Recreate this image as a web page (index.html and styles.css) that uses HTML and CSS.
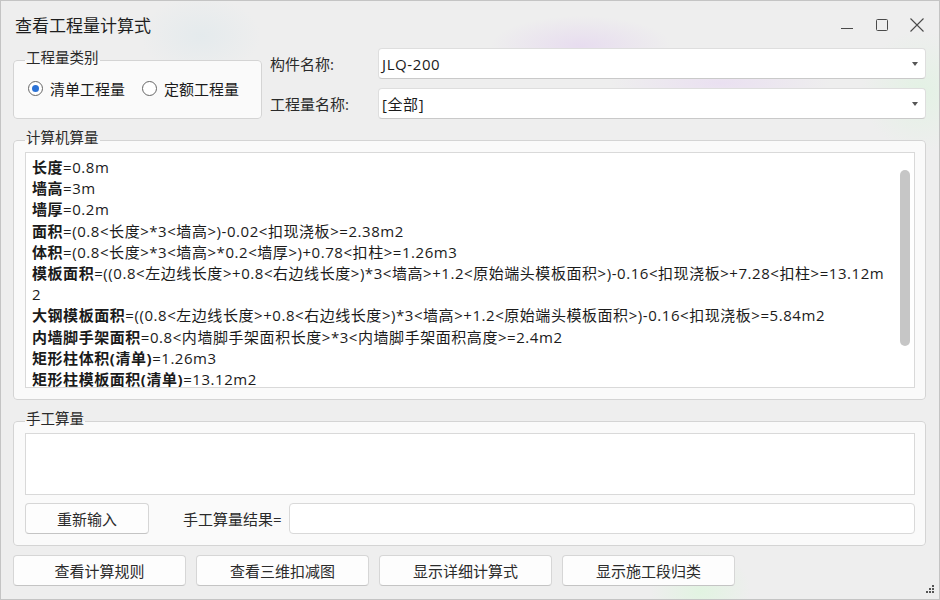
FILE: index.html
```html
<!DOCTYPE html>
<html lang="zh-CN">
<head>
  <meta charset="UTF-8" />
  <title>查看工程量计算式</title>
  <link rel="stylesheet" href="styles.css">
</head>
<body>
  <div class="window">
    <div class="titlebar">
      <div class="title">查看工程量计算式</div>
      <div class="controls">
        <div class="ctl">
          <svg width="14" height="14" viewBox="0 0 14 14"><path d="M1 10.5H13" stroke="#4a4a4a" stroke-width="1" fill="none"/></svg>
        </div>
        <div class="ctl">
          <svg width="14" height="14" viewBox="0 0 14 14"><rect x="1.5" y="1.5" width="11" height="11" rx="1" stroke="#4a4a4a" stroke-width="1" fill="none"/></svg>
        </div>
        <div class="ctl">
          <svg width="16" height="16" viewBox="0 0 16 16"><path d="M1.5 1.5L14.5 14.5M14.5 1.5L1.5 14.5" stroke="#4a4a4a" stroke-width="1.1" fill="none"/></svg>
        </div>
      </div>
    </div>

    <div class="content">
      <div class="top-row">
        <fieldset class="group type-group">
          <legend>工程量类别</legend>
          <div class="radios">
            <label class="radio"><span class="dot checked"></span>清单工程量</label>
            <label class="radio"><span class="dot"></span>定额工程量</label>
          </div>
        </fieldset>
        <div class="fields">
          <div class="field-label">构件名称:</div>
          <div class="combo"><span class="combo-text">JLQ-200</span><span class="arrow"></span></div>
          <div class="field-label">工程量名称:</div>
          <div class="combo"><span class="combo-text">[全部]</span><span class="arrow"></span></div>
        </div>
      </div>

      <fieldset class="group">
        <legend>计算机算量</legend>
        <div class="calc-box">
          <div class="calc-text">
            <div class="line"><b>长度</b>=0.8m</div>
            <div class="line"><b>墙高</b>=3m</div>
            <div class="line"><b>墙厚</b>=0.2m</div>
            <div class="line"><b>面积</b>=(0.8&lt;长度&gt;*3&lt;墙高&gt;)-0.02&lt;扣现浇板&gt;=2.38m2</div>
            <div class="line"><b>体积</b>=(0.8&lt;长度&gt;*3&lt;墙高&gt;*0.2&lt;墙厚&gt;)+0.78&lt;扣柱&gt;=1.26m3</div>
            <div class="line"><b>模板面积</b>=((0.8&lt;左边线长度&gt;+0.8&lt;右边线长度&gt;)*3&lt;墙高&gt;+1.2&lt;原始端头模板面积&gt;)-0.16&lt;扣现浇板&gt;+7.28&lt;扣柱&gt;=13.12m2</div>
            <div class="line"><b>大钢模板面积</b>=((0.8&lt;左边线长度&gt;+0.8&lt;右边线长度&gt;)*3&lt;墙高&gt;+1.2&lt;原始端头模板面积&gt;)-0.16&lt;扣现浇板&gt;=5.84m2</div>
            <div class="line"><b>内墙脚手架面积</b>=0.8&lt;内墙脚手架面积长度&gt;*3&lt;内墙脚手架面积高度&gt;=2.4m2</div>
            <div class="line"><b>矩形柱体积(清单)</b>=1.26m3</div>
            <div class="line"><b>矩形柱模板面积(清单)</b>=13.12m2</div>
          </div>
          <div class="scrollbar"><div class="thumb"></div></div>
        </div>
      </fieldset>

      <fieldset class="group manual-group">
        <legend>手工算量</legend>
        <div class="manual-box"></div>
        <div class="manual-row">
          <div class="btn reset-btn">重新输入</div>
          <div class="result-label">手工算量结果=</div>
          <div class="result-input"></div>
        </div>
      </fieldset>

      <div class="button-row">
        <div class="btn">查看计算规则</div>
        <div class="btn">查看三维扣减图</div>
        <div class="btn">显示详细计算式</div>
        <div class="btn">显示施工段归类</div>
      </div>
    </div>

    <svg class="grip" width="10" height="10" viewBox="0 0 10 10">
      <rect x="7" y="1" width="2" height="2" fill="#555"/>
      <rect x="4" y="4" width="2" height="2" fill="#555"/>
      <rect x="7" y="4" width="2" height="2" fill="#555"/>
      <rect x="1" y="7" width="2" height="2" fill="#555"/>
      <rect x="4" y="7" width="2" height="2" fill="#555"/>
      <rect x="7" y="7" width="2" height="2" fill="#555"/>
    </svg>
  </div>
</body>
</html>
```

FILE: styles.css
```css
* {
  box-sizing: border-box;
}
body {
  margin: 0;
  font-family: "Open Sans", "Noto Sans CJK SC", "Microsoft YaHei", sans-serif;
  font-size: 15px;
  color: #1b1b1b;
}
.window {
  position: relative;
  width: 940px;
  height: 600px;
  border: 1px solid #c4c4c4;
  background-color: #eeeeee;
  background-image:
    radial-gradient(ellipse 90px 30px at 580px 45px, rgba(226, 206, 240, 0.55), transparent),
    radial-gradient(ellipse 110px 25px at 720px 82px, rgba(230, 210, 244, 0.5), transparent),
    radial-gradient(ellipse 60px 60px at 920px 90px, rgba(220, 244, 222, 0.6), transparent),
    radial-gradient(ellipse 50px 40px at 700px 590px, rgba(220, 246, 220, 0.7), transparent),
    radial-gradient(ellipse 60px 40px at 200px 35px, rgba(222, 232, 236, 0.6), transparent);
}
.titlebar {
  height: 47px;
  display: flex;
  align-items: center;
  justify-content: space-between;
  padding: 0 5px 0 14px;
}
.title {
  font-size: 17px;
  color: #1e1e1e;
}
.controls {
  display: flex;
}
.ctl {
  width: 35px;
  height: 30px;
  display: flex;
  align-items: center;
  justify-content: center;
}
.content {
  padding: 0 13px 0 12px;
  display: flex;
  flex-direction: column;
}
.group {
  margin: 0;
  padding: 0 10px 11px 11px;
  border: 1px solid #d4d4d4;
  border-radius: 4px;
  background-color: rgba(255, 255, 255, 0.72);
  min-width: 0;
}
.group legend {
  padding: 0 1px 4px;
  line-height: 20px;
  font-size: 14.5px;
  color: #2a2a2a;
}
.top-row {
  display: flex;
  gap: 8px;
  margin-bottom: 9px;
}
.type-group {
  width: 249px;
  padding-bottom: 18px;
}
.radios {
  display: flex;
  gap: 17px;
  height: 24px;
  margin: 4px 0 0 3px;
}
.radio {
  display: flex;
  align-items: center;
  gap: 7px;
  color: #1b1b1b;
}
.dot {
  width: 15px;
  height: 15px;
  border: 1px solid #666;
  border-radius: 50%;
  background: #fff;
  display: flex;
  align-items: center;
  justify-content: center;
}
.dot.checked::after {
  content: "";
  width: 7px;
  height: 7px;
  border-radius: 50%;
  background: #2b72d6;
}
.fields {
  flex: 1;
  display: grid;
  grid-template-columns: 108px 1fr;
  row-gap: 9px;
  align-items: center;
}
.field-label {
  color: #2a2a2a;
}
.combo {
  height: 31px;
  background: #fff;
  border: 1px solid #dedede;
  border-bottom-color: #c9c9c9;
  border-radius: 4px;
  padding: 0 7px 0 3px;
  display: flex;
  align-items: center;
  justify-content: space-between;
}
.combo-text {
  letter-spacing: 0.6px;
}
.arrow {
  width: 0;
  height: 0;
  border-left: 3px solid transparent;
  border-right: 3px solid transparent;
  border-top: 4px solid #555;
}
.calc-box {
  height: 236px;
  background: #fff;
  border: 1px solid #d9d9d9;
  display: flex;
  overflow: hidden;
}
.calc-text {
  flex: 1;
  padding: 4px 8px 0 6px;
  overflow: hidden;
  word-break: break-all;
  letter-spacing: 0.55px;
}
.line {
  line-height: 21.2px;
}
.line b {
  font-weight: bold;
}
.scrollbar {
  width: 10px;
  margin: 17px 4px 0 4px;
}
.thumb {
  height: 176px;
  border-radius: 5px;
  background: #c6c6c6;
}
.manual-group {
  margin-top: 9px;
}
.manual-box {
  height: 62px;
  background: #fff;
  border: 1px solid #d9d9d9;
}
.manual-row {
  display: flex;
  align-items: center;
  margin-top: 8px;
}
.btn {
  height: 31px;
  background: #fdfdfd;
  border: 1px solid #d6d6d6;
  border-bottom-color: #c4c4c4;
  border-radius: 4px;
  display: flex;
  align-items: center;
  justify-content: center;
  color: #2b2b2b;
}
.reset-btn {
  width: 124px;
}
.result-label {
  margin: 0 7px 0 34px;
  color: #2a2a2a;
}
.result-input {
  flex: 1;
  height: 31px;
  background: #fff;
  border: 1px solid #d9d9d9;
  border-radius: 4px;
}
.button-row {
  display: flex;
  gap: 10px;
  margin-top: 9px;
}
.button-row .btn {
  width: 173px;
}
.grip {
  position: absolute;
  right: 4px;
  bottom: 5px;
}
```
